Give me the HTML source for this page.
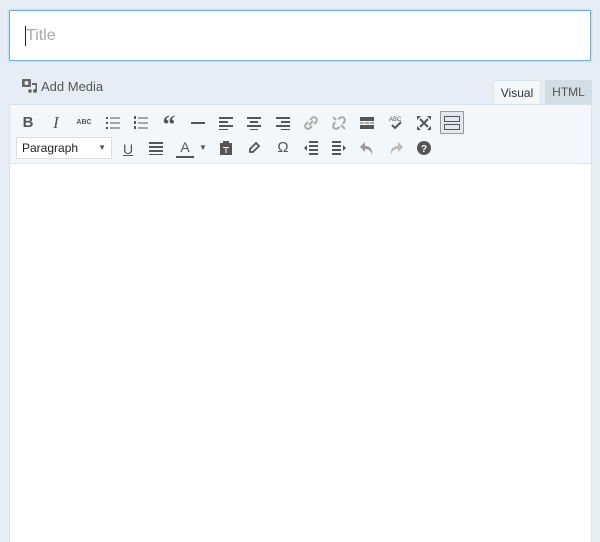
<!DOCTYPE html>
<html style="overflow:hidden;height:542px"><head><style>
body{margin:0;width:600px;height:542px;background:#e6edf5;font-family:"Liberation Sans",sans-serif;position:relative;overflow:hidden}
.title{position:absolute;left:9px;top:10px;width:582px;height:51px;background:#fff;border:1px solid #6fb0d3;box-sizing:border-box;box-shadow:0 0 2px #9cc8e0}
.title span{position:absolute;left:16px;top:16px;font-size:16px;color:#aaa}
.title i{position:absolute;left:15px;top:15px;width:1px;height:20px;background:#222}
.media{position:absolute;left:22px;top:79px;font-size:13px;color:#555}
.tab{position:absolute;top:80px;height:25px;font-size:12px;color:#333;box-sizing:border-box;text-align:center;line-height:25px}
.ed{position:absolute;left:9px;top:104px;width:583px;height:438px;border:1px solid #dbe3ea;border-bottom:none;box-sizing:border-box;background:#fff}
.tb{position:absolute;left:0;top:0;width:100%;height:58px;background:#f4f7fa;border-bottom:1px solid #e0e5ea}
.ic{position:absolute;width:20px;height:20px;font-size:14px;color:#555;text-align:center;line-height:20px;transform:translate(-10px,-10px)}
svg{display:block;margin:3px}
.sel{position:absolute;left:6px;top:32px;width:96px;height:22px;background:#fff;border:1px solid #ddd;box-sizing:border-box;font-size:12px;line-height:20px;padding-left:5px;color:#222}
.sel b{position:absolute;right:5px;top:0;font-size:8px;color:#555}
</style></head><body>
<div class="title"><i></i><span>Title</span></div>
<div class="media"><svg width="16" height="14" style="display:inline-block;vertical-align:-2px;margin:0 3px 0 0" viewBox="0 0 16 14"><rect x="0" y="0" width="9" height="8" rx="1" fill="#666"/><circle cx="4.5" cy="4" r="2" fill="#e6edf5"/><path d="M10 4h5v8a2 2 0 1 1-1.5-2V6h-3.5z" fill="#666"/><circle cx="8" cy="12" r="1.8" fill="#666"/></svg>Add Media</div>
<div class="tab" style="left:493px;width:48px;background:#f4f7fa;border:1px solid #dbe3ea;border-bottom:none">Visual</div>
<div class="tab" style="left:545px;width:47px;background:#d3dde6;color:#555">HTML</div>
<div class="ed"><div class="tb">
<div class="ic" style="left:18px;top:18px;font-weight:bold;font-size:15px">B</div>
<div class="ic" style="left:46px;top:18px;font-style:italic;font-family:'Liberation Serif';font-size:17px">I</div>
<div class="ic" style="left:74px;top:18px;font-size:7px;font-weight:bold">ABC</div>
<div class="ic" style="left:103px;top:18px"><svg width="14" height="14"><g fill="#555"><rect x="0" y="1" width="2" height="2"/><rect x="0" y="6" width="2" height="2"/><rect x="0" y="11" width="2" height="2"/><rect x="4" y="1.5" width="10" height="1"/><rect x="4" y="6.5" width="10" height="1"/><rect x="4" y="11.5" width="10" height="1"/></g></svg></div>
<div class="ic" style="left:131px;top:18px"><svg width="14" height="14"><g fill="#555"><rect x="0" y="0" width="2" height="3"/><rect x="0" y="5" width="2" height="3"/><rect x="0" y="10" width="2" height="3"/><rect x="4" y="1.5" width="10" height="1"/><rect x="4" y="6.5" width="10" height="1"/><rect x="4" y="11.5" width="10" height="1"/></g></svg></div>
<div class="ic" style="left:159px;top:20px;font-size:26px;font-weight:bold;font-family:'Liberation Serif'">“</div>
<div class="ic" style="left:188px;top:18px"><svg width="14" height="14"><rect x="0" y="6" width="14" height="2" fill="#555"/></svg></div>
<div class="ic" style="left:216px;top:18px"><svg width="14" height="14"><g fill="#555"><rect y="1" width="14" height="2"/><rect y="5" width="9" height="2"/><rect y="9" width="14" height="2"/><rect y="13" width="9" height="1.5"/></g></svg></div>
<div class="ic" style="left:244px;top:18px"><svg width="14" height="14"><g fill="#555"><rect y="1" width="14" height="2"/><rect x="3" y="5" width="8" height="2"/><rect y="9" width="14" height="2"/><rect x="3" y="13" width="8" height="1.5"/></g></svg></div>
<div class="ic" style="left:273px;top:18px"><svg width="14" height="14"><g fill="#555"><rect y="1" width="14" height="2"/><rect x="5" y="5" width="9" height="2"/><rect y="9" width="14" height="2"/><rect x="5" y="13" width="9" height="1.5"/></g></svg></div>
<div class="ic" style="left:301px;top:18px"><svg width="14" height="14"><g fill="none" stroke="#aaa" stroke-width="2"><path d="M6 4l2-2a2.5 2.5 0 0 1 4 4l-2 2"/><path d="M8 10l-2 2a2.5 2.5 0 0 1-4-4l2-2"/><path d="M5 9l4-4"/></g></svg></div>
<div class="ic" style="left:329px;top:18px"><svg width="14" height="14"><g fill="none" stroke="#aaa" stroke-width="2"><path d="M6 3l2-1a2.5 2.5 0 0 1 4 4l-1 2"/><path d="M8 11l-2 1a2.5 2.5 0 0 1-4-4l1-2"/><path d="M9 9l4 4M1 1l3 3"/></g></svg></div>
<div class="ic" style="left:357px;top:18px"><svg width="14" height="14"><g fill="#555"><rect y="1" width="14" height="4"/><rect y="6.5" width="4" height="1"/><rect x="5" y="6.5" width="4" height="1"/><rect x="10" y="6.5" width="4" height="1"/><rect y="9" width="14" height="4"/></g></svg></div>
<div class="ic" style="left:386px;top:18px"><svg width="14" height="14"><text x="0" y="5" font-size="6" fill="#555" font-family="Liberation Sans">ABC</text><path d="M3 9l3 3 6-6" stroke="#555" stroke-width="2" fill="none"/></svg></div>
<div class="ic" style="left:414px;top:18px"><svg width="14" height="14"><g fill="#555"><path d="M0 0h4L0 4zM14 0h-4l4 4zM0 14h4L0 10zM14 14h-4l4-4z"/><path d="M3 3l8 8M11 3l-8 8" stroke="#555" stroke-width="2"/></g></svg></div>
<div style="position:absolute;left:430px;top:6px;width:24px;height:23px;background:#e3e7eb;border:1px solid #999;box-sizing:border-box"><svg width="16" height="14" style="margin:4px 3px"><g fill="none" stroke="#555"><rect x=".5" y=".5" width="15" height="5"/><rect x=".5" y="8.5" width="15" height="5"/></g></svg></div>
</div>
<div class="sel">Paragraph<b>▼</b></div>
<div class="ic" style="left:118px;top:44px;text-decoration:underline;font-size:14px">U</div>
<div class="ic" style="left:146px;top:43px"><svg width="14" height="14"><g fill="#555"><rect y="1" width="14" height="2"/><rect y="5" width="14" height="2"/><rect y="9" width="14" height="2"/><rect y="13" width="14" height="1.5"/></g></svg></div>
<div class="ic" style="left:175px;top:42px;font-size:14px">A<div style="position:absolute;left:1px;top:19px;width:18px;height:2px;background:#555"></div></div>
<div class="ic" style="left:193px;top:43px;font-size:8px">▼</div>
<div class="ic" style="left:216px;top:43px"><svg width="14" height="14"><path d="M1 2h3V0h6v2h3v12H1z" fill="#555"/><path d="M4 6h6v1H7.5v5h-1V7H4z" fill="#f4f7fa"/></svg></div>
<div class="ic" style="left:244px;top:43px"><svg width="14" height="14"><path d="M3 8l6-6 3 3-6 6H3z" fill="none" stroke="#555" stroke-width="1.8"/></svg></div>
<div class="ic" style="left:273px;top:43px;font-size:15px">Ω</div>
<div class="ic" style="left:301px;top:43px"><svg width="14" height="14"><g fill="#555"><rect x="5" y="0" width="9" height="2"/><rect x="5" y="4" width="9" height="2"/><rect x="5" y="8" width="9" height="2"/><rect x="5" y="12" width="9" height="2"/><path d="M0 7l3-3v6z"/></g></svg></div>
<div class="ic" style="left:329px;top:43px"><svg width="14" height="14"><g fill="#555"><rect x="0" y="0" width="9" height="2"/><rect x="0" y="4" width="9" height="2"/><rect x="0" y="8" width="9" height="2"/><rect x="0" y="12" width="9" height="2"/><path d="M14 7l-3-3v6z"/></g></svg></div>
<div class="ic" style="left:357px;top:43px"><svg width="14" height="14"><path d="M5 1L0 6l5 5V8c4 0 6 2 7 6 1-6-2-9-7-9z" fill="#999"/></svg></div>
<div class="ic" style="left:386px;top:43px"><svg width="14" height="14"><path d="M9 1l5 5-5 5V8c-4 0-6 2-7 6-1-6 2-9 7-9z" fill="#bbb"/></svg></div>
<div class="ic" style="left:414px;top:43px"><svg width="14" height="14"><circle cx="7" cy="7" r="7" fill="#555"/><text x="7" y="11" font-size="10" font-weight="bold" fill="#fff" text-anchor="middle" font-family="Liberation Sans">?</text></svg></div>
</div>
</body></html>
